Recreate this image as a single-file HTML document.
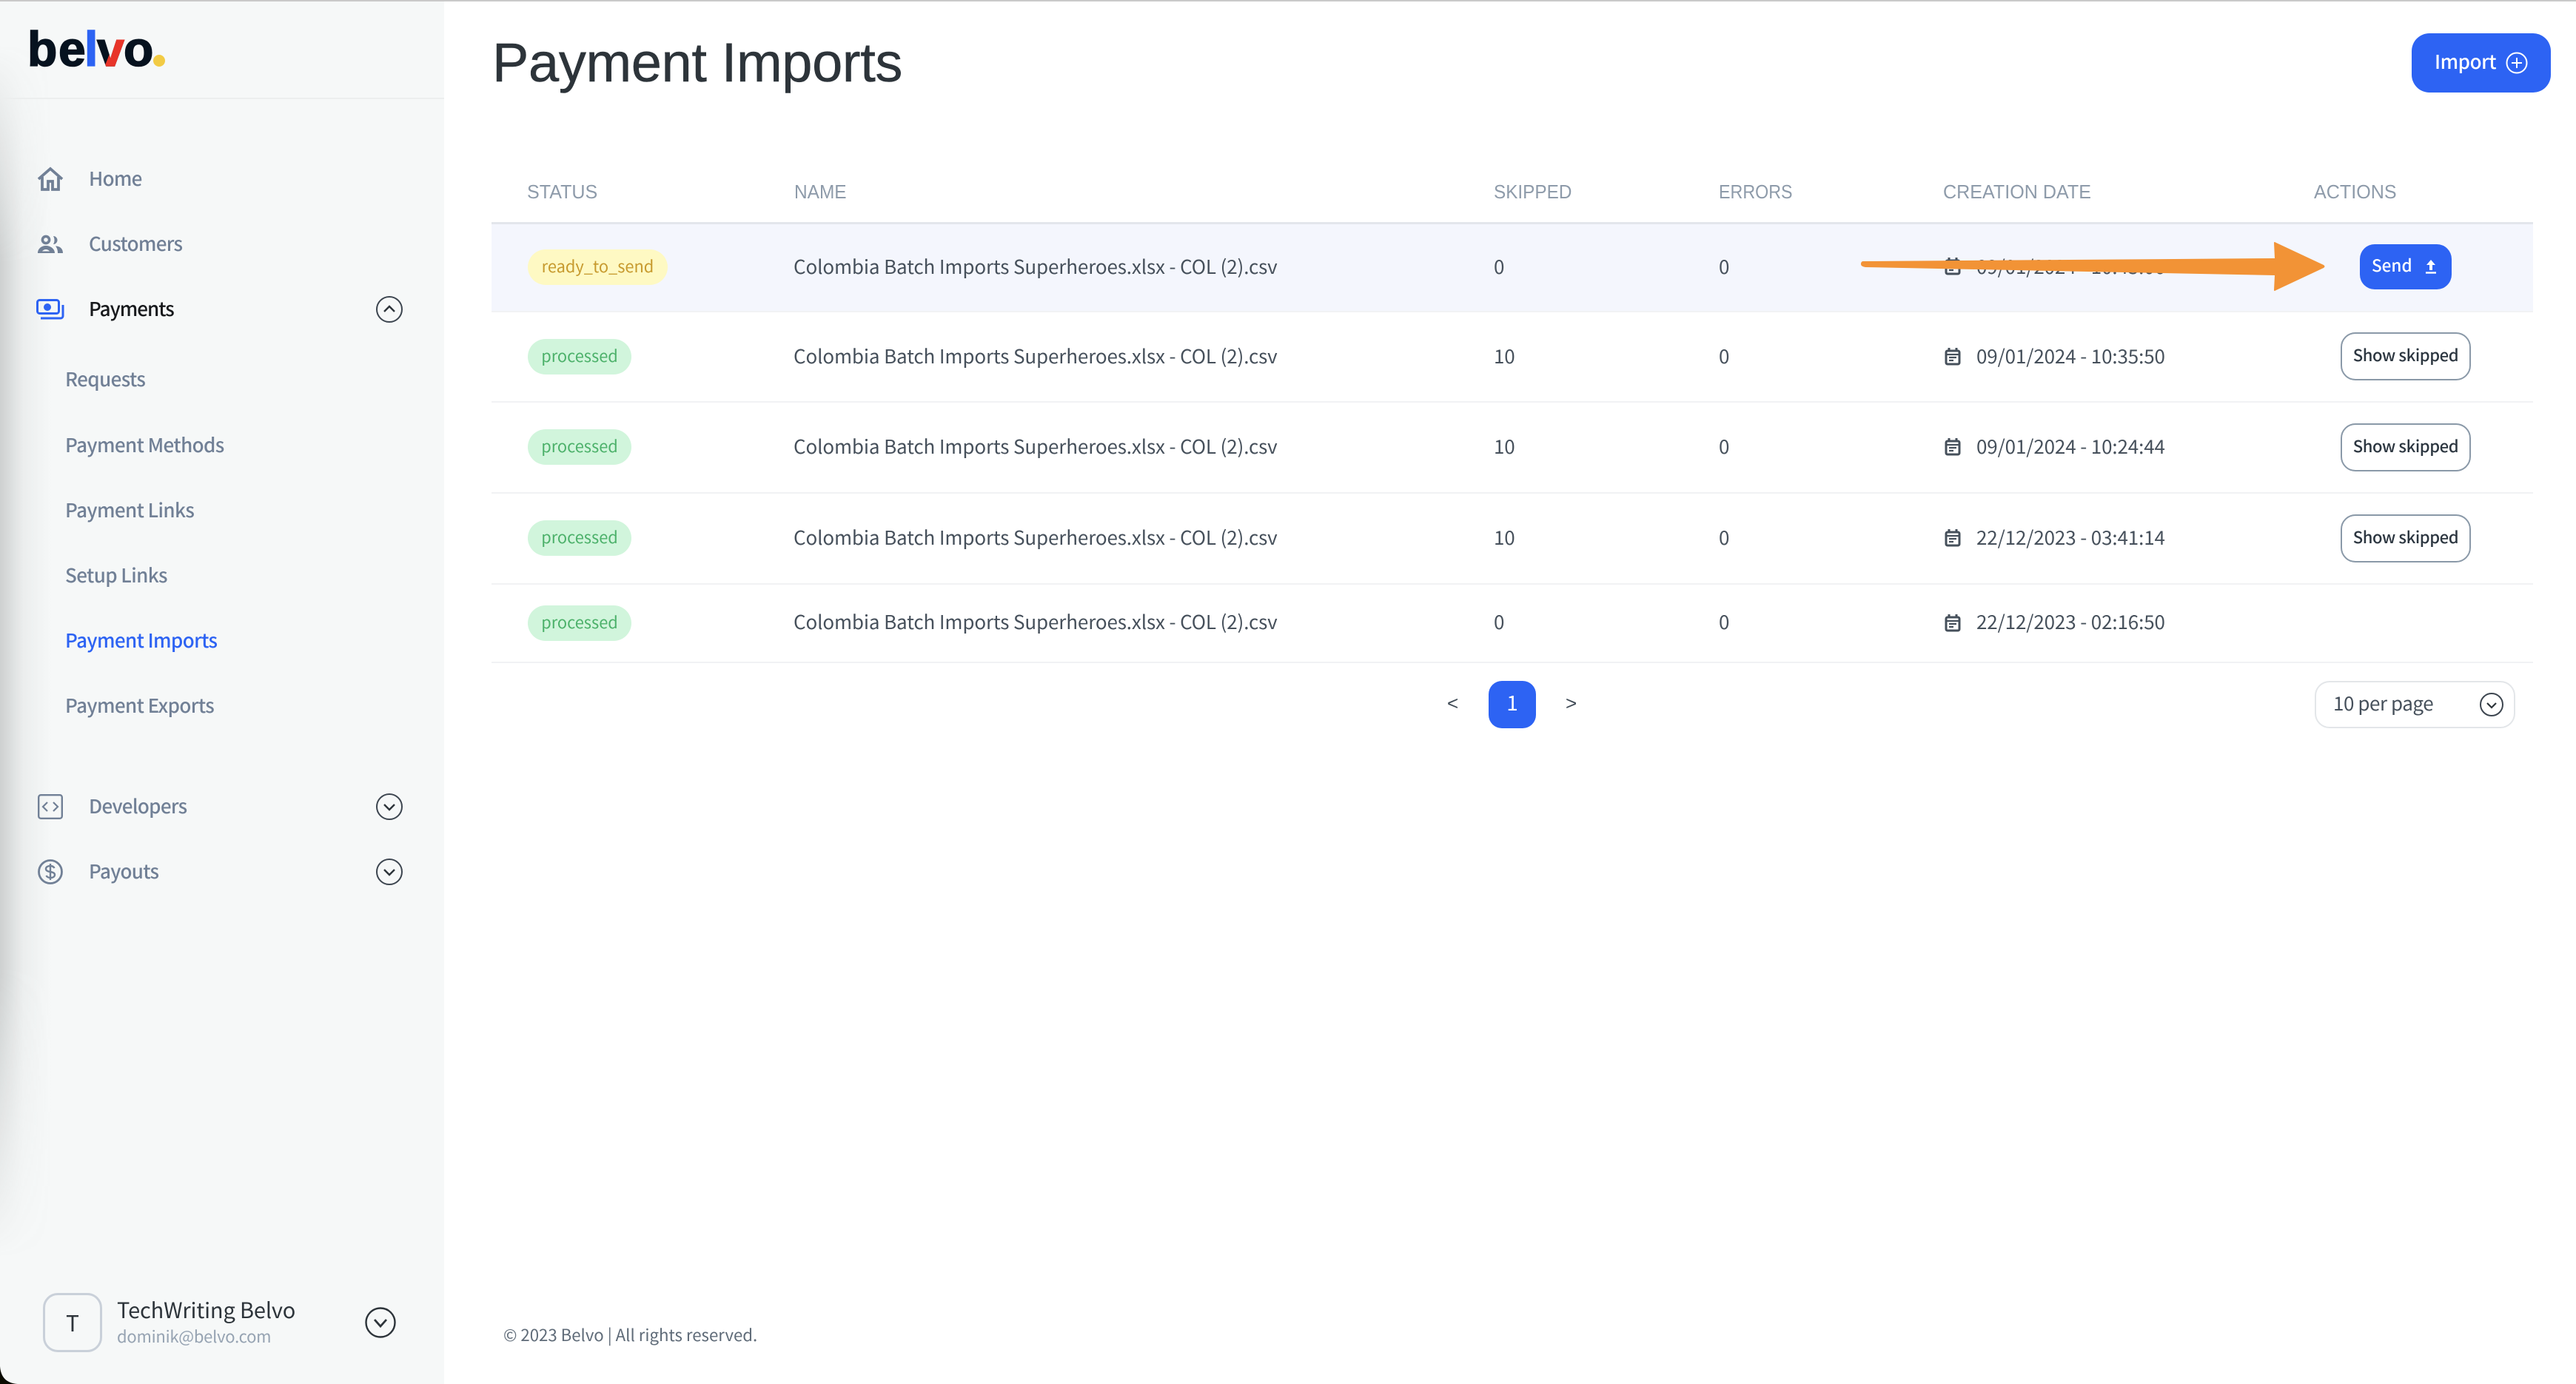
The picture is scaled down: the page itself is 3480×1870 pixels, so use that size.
<!DOCTYPE html>
<html lang="en"><head><meta charset="utf-8"><title>Payment Imports</title>
<style>
html,body{margin:0;padding:0;background:#fff}
body{width:3480px;height:1870px;position:relative;overflow:hidden;font-family:"Noto Sans CJK JP","Liberation Sans",sans-serif;color:#3f4a55}
.t{position:absolute;white-space:nowrap;line-height:40px;height:40px;font-size:26px}
.b{position:absolute;box-sizing:border-box}
svg{position:absolute;overflow:visible}
.nav{font-size:26px;color:#718096;font-weight:500;letter-spacing:-.7px}
.sub{font-size:26px;color:#718096;font-weight:500;left:88px;letter-spacing:-.6px}
.th{font-size:26px;color:#8e9baa;font-family:"Liberation Sans",sans-serif;top:239px;transform-origin:0 50%}
.d{font-size:26px;color:#46505b;letter-spacing:-.13px}
.pill{position:absolute;height:48px;border-radius:24px;background:#d1f5dc;color:#4cb16a;font-size:21.8px;line-height:46px;text-align:center;left:713px;width:140px}
.sk{position:absolute;left:3162px;width:176px;height:65px;box-sizing:border-box;border:2.5px solid #8a99a8;border-radius:20px;background:#fff;text-align:center;font-size:22px;letter-spacing:-.4px;font-weight:500;line-height:56px;color:#2c3640;white-space:nowrap}
.logo{position:absolute;font-family:"Liberation Sans",sans-serif;font-weight:700;font-size:66px;line-height:66px;color:#06121f;-webkit-text-stroke:1.6px #06121f}
</style></head><body>
<div class="b" style="left:0;top:0;width:600px;height:1870px;background:#f6f8f8"></div>
<div class="b" style="left:0;top:60px;width:70px;height:1640px;background:linear-gradient(90deg,rgba(90,95,95,.26),rgba(120,125,125,.08) 45%,rgba(246,248,248,0));-webkit-mask-image:linear-gradient(180deg,transparent 0,#000 18%,#000 76%,transparent 100%);mask-image:linear-gradient(180deg,transparent 0,#000 18%,#000 76%,transparent 100%)"></div>
<div class="b" style="left:0;top:132px;width:600px;height:2px;background:#eceeee"></div>
<div class="b" style="left:0;top:0;width:3480px;height:2px;background:#c9c9c9"></div>
<svg style="left:0;top:1840px" width="30" height="30" viewBox="0 0 30 30"><path d="M0 6C1 20 8 29 24 30H0Z" fill="#0a0a00"/></svg>

<div class="logo" style="left:37px;top:33px">b</div>
<div class="logo" style="left:79px;top:33px">e</div>
<div class="logo" style="left:114px;top:33px;color:#2d63f3;-webkit-text-stroke-color:#2d63f3">l</div>
<div class="logo" style="left:131px;top:33px">v</div>
<div class="logo" aria-hidden="true" style="left:131px;top:33px;color:#e8352a;-webkit-text-stroke-color:#e8352a;clip-path:polygon(27px 15px,50px 15px,50px 60px,9px 60px)">v</div>
<div class="logo" style="left:167px;top:33px">o</div>
<svg style="left:207px;top:74px" width="16" height="16"><circle cx="8" cy="8" r="8" fill="#f2cb45"/></svg>

<!-- nav icons -->
<svg style="left:50px;top:226px" width="36" height="32" viewBox="0 0 36 32"><path d="M2 16 18 2l16 14M7 13v17h8V19h6v11h8V13" fill="none" stroke="#718096" stroke-width="3.800"/></svg>
<svg style="left:51px;top:318px" width="34" height="25" viewBox="0 0 34 25"><circle cx="11" cy="6" r="4.600" fill="none" stroke="#718096" stroke-width="3.600"/><path d="M21 1a5.500 5.500 0 0 1 0 11c2-3 2-8 0-11Z" fill="#718096"/><path d="M0 24c0-6 5-10 11-10s12 4 12 10ZM6 21.500h10c-1-1.500-3-2.500-5-2.500s-4 1-5 2.500Z" fill="#718096" fill-rule="evenodd"/><path d="M24 14.500c6 0 10 3.500 10 9.500h-7c0-4-1-7-3-9.500Z" fill="#718096"/></svg>
<svg style="left:49px;top:404px" width="38" height="28" viewBox="0 0 38 28"><rect x="1.500" y="1.500" width="29" height="18" rx="3" fill="none" stroke="#2d63f3" stroke-width="3"/><circle cx="15" cy="11" r="5" fill="#2d63f3"/><path d="M36 8v15a3 3 0 0 1-3 3H6" fill="none" stroke="#2d63f3" stroke-width="3"/></svg>
<svg style="left:51px;top:1073px" width="34" height="34" viewBox="0 0 34 34"><rect x="1.200" y="1.200" width="31.600" height="31.600" rx="3" fill="none" stroke="#718096" stroke-width="2.400"/><path d="M13 11l-6 6 6 6M21 11l6 6-6 6" fill="none" stroke="#718096" stroke-width="2.200"/></svg>
<svg style="left:51px;top:1161px" width="34" height="34" viewBox="0 0 34 34"><circle cx="17" cy="17" r="15.500" fill="none" stroke="#718096" stroke-width="2.800"/><path d="M22.500 12c-1-2-3-3-5.500-3-3.500 0-6 1.500-6 4s2.500 3.500 6 4 6 1.500 6 4-2.500 4-6 4c-2.500 0-4.500-1-5.500-3M17 6v22" fill="none" stroke="#718096" stroke-width="2.400"/></svg>

<div class="t nav" style="left:120px;top:221px">Home</div>
<div class="t nav" style="left:120px;top:309px">Customers</div>
<div class="t nav" style="left:120px;top:397px;color:#17191c;letter-spacing:-1px">Payments</div>
<div class="t sub" style="top:492px">Requests</div>
<div class="t sub" style="top:581px">Payment Methods</div>
<div class="t sub" style="top:669px">Payment Links</div>
<div class="t sub" style="top:757px">Setup Links</div>
<div class="t sub" style="top:845px;color:#2d63f3">Payment Imports</div>
<div class="t sub" style="top:933px">Payment Exports</div>
<div class="t nav" style="left:120px;top:1069px">Developers</div>
<div class="t nav" style="left:120px;top:1157px">Payouts</div>

<svg style="left:508px;top:400px" width="36" height="36" viewBox="0 0 36 36"><circle cx="18" cy="18" r="17" fill="none" stroke="#3d4650" stroke-width="2"/><path d="M11 21l7-7 7 7" fill="none" stroke="#2d343a" stroke-width="2.400"/></svg>
<svg style="left:508px;top:1072px" width="36" height="36" viewBox="0 0 36 36"><circle cx="18" cy="18" r="17" fill="none" stroke="#3d4650" stroke-width="2"/><path d="M11 15l7 7 7-7" fill="none" stroke="#2d343a" stroke-width="2.400"/></svg>
<svg style="left:508px;top:1160px" width="36" height="36" viewBox="0 0 36 36"><circle cx="18" cy="18" r="17" fill="none" stroke="#3d4650" stroke-width="2"/><path d="M11 15l7 7 7-7" fill="none" stroke="#2d343a" stroke-width="2.400"/></svg>

<!-- user -->
<div class="b" style="left:58px;top:1747px;width:80px;height:80px;border:3px solid #c9d0d9;border-radius:20px"></div>
<div class="t" style="left:58px;width:80px;text-align:center;top:1766px;font-size:30px;color:#2d343a">T</div>
<div class="t" style="left:158px;top:1749px;font-size:29px;letter-spacing:-.15px;color:#2d343a">TechWriting Belvo</div>
<div class="t" style="left:158px;top:1785px;font-size:22px;letter-spacing:-.25px;color:#96a3b2">dominik@belvo.com</div>
<svg style="left:493px;top:1766px" width="42" height="42" viewBox="0 0 42 42"><circle cx="21" cy="21" r="19.500" fill="none" stroke="#2d343a" stroke-width="2.400"/><path d="M13 17l8 9 8-9" fill="none" stroke="#2d343a" stroke-width="2.800"/></svg>
<div class="t" style="left:680px;top:1783px;font-size:22.200px;color:#5f6b78">© 2023 Belvo | All rights reserved.</div>

<!-- header -->
<div class="t" style="left:665px;top:40px;height:90px;line-height:90px;font-family:'Liberation Sans',sans-serif;font-size:74px;color:#2d343a;letter-spacing:-.35px;-webkit-text-stroke:.5px #2d343a">Payment Imports</div>
<div class="b" style="left:3258px;top:45px;width:188px;height:80px;background:#2d63f3;border-radius:24px"></div>
<div class="t" style="left:3289px;top:63px;font-size:26px;letter-spacing:-.45px;font-weight:500;color:#fff">Import</div>
<svg style="left:3385px;top:70px" width="30" height="30" viewBox="0 0 30 30"><circle cx="15" cy="15" r="13.500" fill="none" stroke="#fff" stroke-width="2"/><path d="M15 8v14M8 15h14" stroke="#fff" stroke-width="2" fill="none"/></svg>

<!-- table head -->
<div class="t th" style="left:712px;transform:scaleX(.965)">STATUS</div>
<div class="t th" style="left:1073px;transform:scaleX(.94)">NAME</div>
<div class="t th" style="left:2018px;transform:scaleX(.935)">SKIPPED</div>
<div class="t th" style="left:2322px;transform:scaleX(.895)">ERRORS</div>
<div class="t th" style="left:2625px;transform:scaleX(.966)">CREATION DATE</div>
<div class="t th" style="left:3126px;transform:scaleX(.966)">ACTIONS</div>

<div class="b" style="left:664px;top:303px;width:2758px;height:117px;background:#f4f6fd"></div>
<div class="b" style="left:664px;top:300px;width:2758px;height:3px;background:#e3e6ec"></div>
<div class="b" style="left:664px;top:420px;width:2758px;height:2px;background:#f1f2f4"></div>
<div class="b" style="left:664px;top:542px;width:2758px;height:2px;background:#f1f2f4"></div>
<div class="b" style="left:664px;top:665px;width:2758px;height:2px;background:#f1f2f4"></div>
<div class="b" style="left:664px;top:788px;width:2758px;height:2px;background:#f1f2f4"></div>
<div class="b" style="left:664px;top:894px;width:2758px;height:2px;background:#f1f2f4"></div>

<!-- row 1 -->
<div class="pill" style="top:337px;width:189px;background:#fef9c3;color:#c79a2e">ready_to_send</div>
<div class="t d" style="left:1072px;top:340px">Colombia Batch Imports Superheroes.xlsx - COL (2).csv</div>
<div class="t d" style="left:2018px;top:340px">0</div>
<div class="t d" style="left:2322px;top:340px">0</div>
<svg style="left:2627px;top:348px" width="22" height="24" viewBox="0 0 22 24"><path d="M6 0v4M16 0v4" stroke="#46505b" stroke-width="3" fill="none"/><rect x="2" y="4" width="18" height="18" rx="2" fill="none" stroke="#46505b" stroke-width="3"/><path d="M2 9h18M6 13h10M6 17h6" stroke="#46505b" stroke-width="2.200" fill="none"/></svg>
<div class="t d" style="left:2670px;top:340px">09/01/2024 - 10:43:06</div>

<!-- row 2 -->
<div class="pill" style="top:458px">processed</div>
<div class="t d" style="left:1072px;top:461px">Colombia Batch Imports Superheroes.xlsx - COL (2).csv</div>
<div class="t d" style="left:2018px;top:461px">10</div>
<div class="t d" style="left:2322px;top:461px">0</div>
<svg style="left:2627px;top:470px" width="22" height="24" viewBox="0 0 22 24"><path d="M6 0v4M16 0v4" stroke="#46505b" stroke-width="3" fill="none"/><rect x="2" y="4" width="18" height="18" rx="2" fill="none" stroke="#46505b" stroke-width="3"/><path d="M2 9h18M6 13h10M6 17h6" stroke="#46505b" stroke-width="2.200" fill="none"/></svg>
<div class="t d" style="left:2670px;top:461px">09/01/2024 - 10:35:50</div>
<div class="sk" style="top:449px">Show skipped</div>

<!-- row 3 -->
<div class="pill" style="top:580px">processed</div>
<div class="t d" style="left:1072px;top:583px">Colombia Batch Imports Superheroes.xlsx - COL (2).csv</div>
<div class="t d" style="left:2018px;top:583px">10</div>
<div class="t d" style="left:2322px;top:583px">0</div>
<svg style="left:2627px;top:592px" width="22" height="24" viewBox="0 0 22 24"><path d="M6 0v4M16 0v4" stroke="#46505b" stroke-width="3" fill="none"/><rect x="2" y="4" width="18" height="18" rx="2" fill="none" stroke="#46505b" stroke-width="3"/><path d="M2 9h18M6 13h10M6 17h6" stroke="#46505b" stroke-width="2.200" fill="none"/></svg>
<div class="t d" style="left:2670px;top:583px">09/01/2024 - 10:24:44</div>
<div class="sk" style="top:572px">Show skipped</div>

<!-- row 4 -->
<div class="pill" style="top:703px">processed</div>
<div class="t d" style="left:1072px;top:706px">Colombia Batch Imports Superheroes.xlsx - COL (2).csv</div>
<div class="t d" style="left:2018px;top:706px">10</div>
<div class="t d" style="left:2322px;top:706px">0</div>
<svg style="left:2627px;top:715px" width="22" height="24" viewBox="0 0 22 24"><path d="M6 0v4M16 0v4" stroke="#46505b" stroke-width="3" fill="none"/><rect x="2" y="4" width="18" height="18" rx="2" fill="none" stroke="#46505b" stroke-width="3"/><path d="M2 9h18M6 13h10M6 17h6" stroke="#46505b" stroke-width="2.200" fill="none"/></svg>
<div class="t d" style="left:2670px;top:706px">22/12/2023 - 03:41:14</div>
<div class="sk" style="top:695px">Show skipped</div>

<!-- row 5 -->
<div class="pill" style="top:818px">processed</div>
<div class="t d" style="left:1072px;top:820px">Colombia Batch Imports Superheroes.xlsx - COL (2).csv</div>
<div class="t d" style="left:2018px;top:820px">0</div>
<div class="t d" style="left:2322px;top:820px">0</div>
<svg style="left:2627px;top:830px" width="22" height="24" viewBox="0 0 22 24"><path d="M6 0v4M16 0v4" stroke="#46505b" stroke-width="3" fill="none"/><rect x="2" y="4" width="18" height="18" rx="2" fill="none" stroke="#46505b" stroke-width="3"/><path d="M2 9h18M6 13h10M6 17h6" stroke="#46505b" stroke-width="2.200" fill="none"/></svg>
<div class="t d" style="left:2670px;top:820px">22/12/2023 - 02:16:50</div>

<!-- send + arrow -->
<div class="b" style="left:3188px;top:330px;width:124px;height:61px;background:#2d63f3;border-radius:20px"></div>
<div class="t" style="left:3204px;top:338px;font-size:22.500px;font-weight:500;color:#fff">Send</div>
<svg style="left:3276px;top:351px" width="16" height="19" viewBox="0 0 16 19"><path d="M8 0l6 7H10v7H6V7H2Z" fill="#fff"/><path d="M1 17.500h14" stroke="#fff" stroke-width="2.400"/></svg>
<svg style="left:2502px;top:320px" width="660" height="80" viewBox="0 0 660 80"><path d="M15 33 571 29 570 8 Q570 6 573 8 L637 38 Q640 40 637 42 L573 72 Q570 74 570 72 L571 52 18 41 Q12 40 12 37 Q12 33 15 33Z" fill="#f29336"/></svg>

<!-- pagination -->
<div class="t" style="left:1955px;top:930px;font-size:26px;color:#3f4a55;font-family:'Liberation Sans',sans-serif">&lt;</div>
<div class="b" style="left:2011px;top:920px;width:64px;height:64px;background:#2d63f3;border-radius:18px;color:#fff;font-size:28px;text-align:center;line-height:58px">1</div>
<div class="t" style="left:2115px;top:930px;font-size:26px;color:#3f4a55;font-family:'Liberation Sans',sans-serif">&gt;</div>
<div class="b" style="left:3127px;top:920px;width:271px;height:64px;border:2px solid #e3e6e9;border-radius:20px"></div>
<div class="t d" style="left:3152px;top:930px;letter-spacing:-.45px">10 per page</div>
<svg style="left:3350px;top:936px" width="32" height="32" viewBox="0 0 32 32"><circle cx="16" cy="16" r="15" fill="none" stroke="#3d4650" stroke-width="2"/><path d="M10 14l6 6 6-6" fill="none" stroke="#2d343a" stroke-width="2.200"/></svg>
</body></html>
